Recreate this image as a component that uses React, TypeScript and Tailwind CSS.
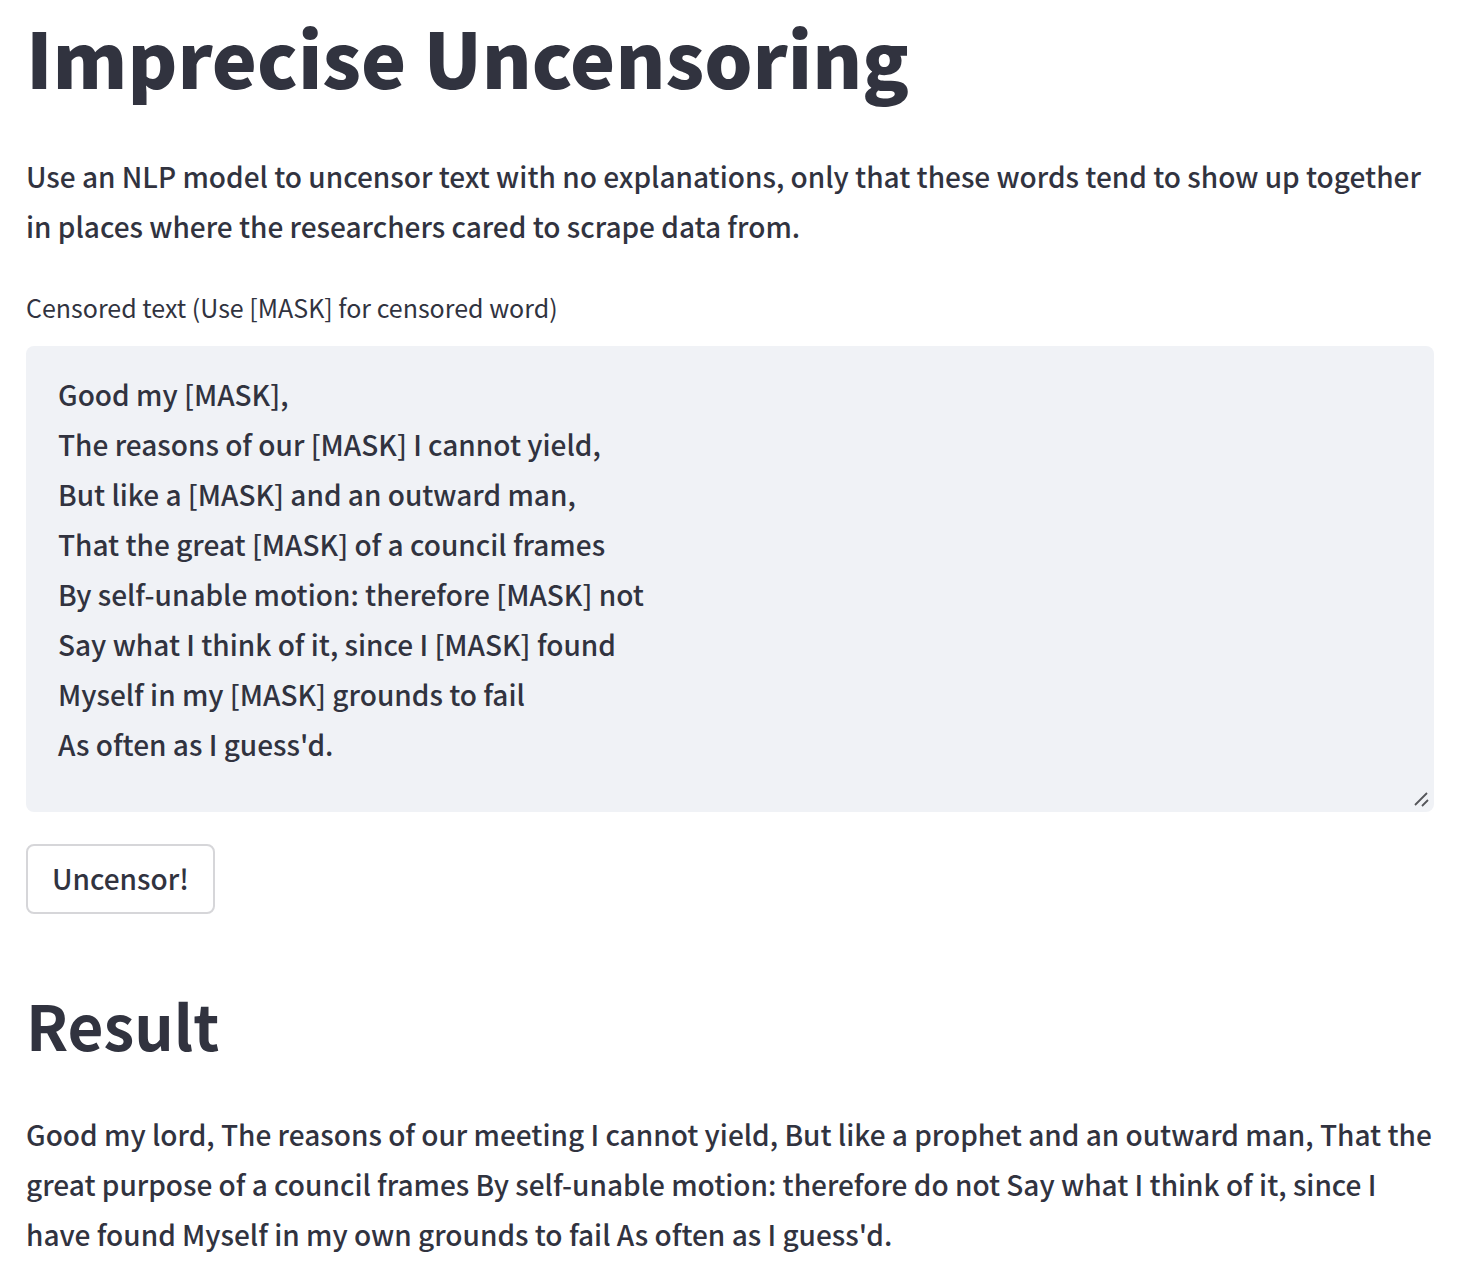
import { useState } from "react";

const initialText = `Good my [MASK],
The reasons of our [MASK] I cannot yield,
But like a [MASK] and an outward man,
That the great [MASK] of a council frames
By self-unable motion: therefore [MASK] not
Say what I think of it, since I [MASK] found
Myself in my [MASK] grounds to fail
As often as I guess'd.`;

export default function App() {
  const [text, setText] = useState(initialText);

  return (
    <main className="bg-white pt-1.5 pr-[30px] pb-3 pl-[26px] font-['Noto_Sans_CJK_SC','Noto_Sans',sans-serif] text-[28px] leading-[50px] font-medium text-[#31333f]">
      <h1 className="text-[76px] leading-[100px] font-black">Imprecise Uncensoring</h1>
      <p className="mt-[45px]">
        Use an NLP model to uncensor text with no explanations, only that these words tend to show up together in places where the researchers cared to scrape data from.
      </p>
      <label htmlFor="censored" className="mt-8 block text-[25px] leading-[48px] font-normal">
        Censored text (Use [MASK] for censored word)
      </label>
      <div className="relative mt-[15px]">
        <textarea
          id="censored"
          rows={8}
          value={text}
          onChange={(e) => setText(e.target.value)}
          className="block h-[466px] w-full resize-none rounded-lg bg-[#f0f2f6] px-8 py-[23px] outline-none"
        />
        <svg className="pointer-events-none absolute right-1 bottom-1 size-4" viewBox="0 0 16 16" fill="none" stroke="#55565a" strokeWidth="1.8" aria-hidden="true">
          <path d="M1 13 13 1M8 14l6-6" />
        </svg>
      </div>
      <button type="button" className="mt-8 block h-[70px] rounded-lg border-2 border-[#d6d6d9] bg-white px-6 pb-0.5">
        Uncensor!
      </button>
      <h2 className="mt-[60px] text-[62px] leading-[100px] font-semibold">Result</h2>
      <p className="mt-[35px]">
        Good my lord, The reasons of our meeting I cannot yield, But like a prophet and an outward man, That the great purpose of a council frames By self-unable motion: therefore do not Say what I think of it, since I have found Myself in my own grounds to fail As often as I guess'd.
      </p>
    </main>
  );
}
